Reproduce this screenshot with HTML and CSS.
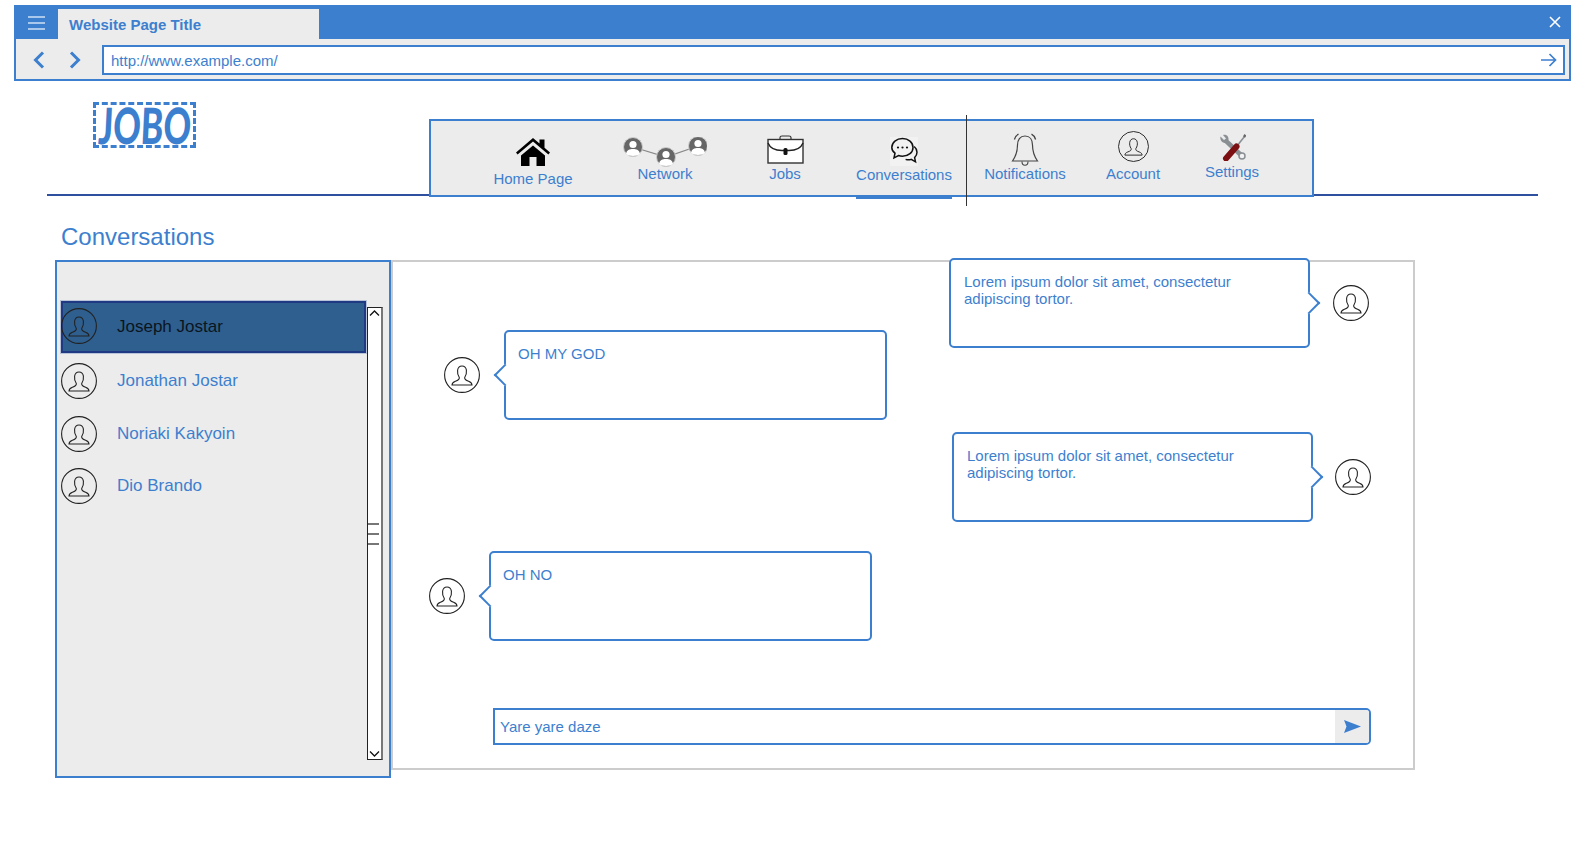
FILE: index.html
```html
<!DOCTYPE html>
<html>

<head>
    <meta charset="UTF-8" />
    <title>Website Page Title</title>
    <link rel="stylesheet" href="styles.css">
</head>

<body>
    <svg class="defs" width="0" height="0">
        <symbol id="user" viewBox="0 0 36 36">
            <circle cx="18" cy="18" r="17.4" fill="none" stroke="#222" stroke-width="1.1" />
            <path d="M15.3 20.5C13.6 18 13.3 15.5 13.6 13.2C14 10.4 15.9 9 18 9C20.1 9 22 10.4 22.4 13.2C22.7 15.5 22.4 18 20.7 20.5C20.4 22.6 21.6 23.2 24.6 24.3C26.9 25.2 28 26.4 28 28L8 28C8 26.4 9.1 25.2 11.4 24.3C14.4 23.2 15.6 22.6 15.3 20.5Z" fill="none" stroke="#222" stroke-width="1.1" />
        </symbol>
    </svg>

    <div class="window">
        <div class="titlebar">
            <div class="menu-btn">
                <span></span><span></span><span></span>
            </div>
            <div class="tab">Website Page Title</div>
            <svg class="close" width="12" height="12" viewBox="0 0 12 12">
                <path d="M1 1L11 11M11 1L1 11" stroke="#fff" stroke-width="1.6" />
            </svg>
        </div>
        <div class="toolbar">
            <svg class="nav-arrow" width="14" height="18" viewBox="0 0 14 18">
                <path d="M11 1.5L3.5 9L11 16.5" fill="none" stroke="#3d7fcf" stroke-width="3" />
            </svg>
            <svg class="nav-arrow" width="14" height="18" viewBox="0 0 14 18">
                <path d="M3 1.5L10.5 9L3 16.5" fill="none" stroke="#3d7fcf" stroke-width="3" />
            </svg>
            <div class="address">
                <span class="address-text">http://www.example.com/</span>
                <svg width="16" height="14" viewBox="0 0 16 14">
                    <path d="M0 7H14.5M8.5 1L14.5 7L8.5 13" fill="none" stroke="#3d7fcf" stroke-width="1.7" />
                </svg>
            </div>
        </div>
    </div>

    <header class="site-header">
        <div class="logo"><span>JOBO</span></div>
        <nav class="main-nav">
            <a class="nav-item home">
                <svg width="34" height="28" viewBox="0 0 34 28">
                    <path d="M0 14.5L17 0L23.5 5.5V1.5H28.5V9.8L34 14.5L32.4 16.4L17 3.6L1.6 16.4Z" fill="#000" />
                    <path d="M5 17.5L17 7.5L29 17.5V28H20.5V19H13.5V28H5Z" fill="#000" />
                </svg>
                <span>Home Page</span>
            </a>
            <a class="nav-item network">
                <svg width="84" height="30" viewBox="0 0 84 30">
                    <path d="M10 10L43 20L75 9" fill="none" stroke="#888" stroke-width="1.2" />
                    <g id="node">
                        <circle cx="10" cy="10" r="9.5" fill="#666" stroke="#ccc" />
                        <circle cx="10" cy="7.5" r="3.6" fill="#fff" />
                        <path d="M3 17C3.5 13 6.5 12 10 12C13.5 12 16.5 13 17 17C14 19.6 6 19.6 3 17Z" fill="#fff" />
                    </g>
                    <use href="#node" x="33" y="10" />
                    <use href="#node" x="65" y="-1" />
                </svg>
                <span>Network</span>
            </a>
            <a class="nav-item jobs">
                <svg width="37" height="29" viewBox="0 0 37 29">
                    <path d="M13 5V2.5C13 1.5 14 1 15 1H22C23 1 24 1.5 24 2.5V5" fill="none" stroke="#333" stroke-width="1.2" />
                    <rect x="1" y="4.5" width="35" height="23.5" fill="#fff" stroke="#333" stroke-width="1.4" />
                    <path d="M1 8C3 13 8 15.5 15 15.5H22C29 15.5 34 13 36 8" fill="none" stroke="#222" stroke-width="1.4" />
                    <rect x="16.5" y="13" width="4" height="7" rx="1.5" fill="#111" />
                </svg>
                <span>Jobs</span>
            </a>
            <a class="nav-item conversations">
                <svg width="28" height="29" viewBox="0 0 28 29">
                    <rect width="28" height="29" fill="#f2f2f2" />
                    <path d="M12.5 1.5C18.5 1.5 23 5.4 23 10.4C23 15.4 18.5 19.2 12.5 19.2C11 19.2 9.7 19 8.5 18.5L4 20.8L5 16.2C3 14.6 1.8 12.6 1.8 10.4C1.8 5.4 6.5 1.5 12.5 1.5Z" fill="none" stroke="#111" stroke-width="1.5" />
                    <path d="M24.2 9.5C26 11 27 13 27 15.2C27 17.4 26 19.2 24.6 20.6L25.5 24.8L21.2 22.4C19.5 23 17.5 23 15.6 22.4" fill="none" stroke="#111" stroke-width="1.5" />
                    <circle cx="8" cy="10.5" r="1.1" fill="#111" />
                    <circle cx="12.5" cy="10.5" r="1.1" fill="#111" />
                    <circle cx="17" cy="10.5" r="1.1" fill="#111" />
                </svg>
                <span class="active-label">Conversations</span>
            </a>
            <a class="nav-item notifications">
                <svg width="28" height="34" viewBox="0 0 28 34">
                    <path d="M14 3C9 3 6.5 7 6.5 12C6.5 19 5 23 1.5 28H26.5C23 23 21.5 19 21.5 12C21.5 7 19 3 14 3Z" fill="none" stroke="#444" stroke-width="1.2" />
                    <path d="M11 28.5C11 33.5 17 33.5 17 28.5" fill="none" stroke="#444" stroke-width="1.1" />
                    <path d="M7.5 1.2C5.5 2.2 4 4 3.4 6.5M20.5 1.2C22.5 2.2 24 4 24.6 6.5" fill="none" stroke="#444" stroke-width="1.3" />
                </svg>
                <span>Notifications</span>
            </a>
            <a class="nav-item account">
                <svg width="31" height="31"><use href="#user" /></svg>
                <span>Account</span>
            </a>
            <a class="nav-item settings">
                <svg width="27" height="27" viewBox="0 0 27 27">
                    <path d="M7 7L22.5 21.5" fill="none" stroke="#8a8f94" stroke-width="4.5" />
                    <path d="M1.5 2.5L5 6L7 4.5L4 1C7.5 0 10 2.5 9.5 6L7 9C4 9.5 0.5 6.5 1.5 2.5Z" fill="#8a8f94" />
                    <circle cx="23" cy="22" r="3" fill="#f2f2f2" stroke="#8a8f94" stroke-width="1.5" />
                    <path d="M18 12L25.5 2.5" fill="none" stroke="#8a8f94" stroke-width="1.6" />
                    <path d="M25 3L26.5 0.8" fill="none" stroke="#666" stroke-width="2.4" />
                    <path d="M7 24.5L17.5 12.5" fill="none" stroke="#7c0f12" stroke-width="6" stroke-linecap="round" />
                </svg>
                <span>Settings</span>
            </a>
        </nav>
    </header>

    <main class="content">
        <h1 class="page-title">Conversations</h1>
        <div class="columns">
            <aside class="contacts">
                <ul class="contact-list">
                    <li class="contact selected">
                        <svg width="36" height="36"><use href="#user" /></svg>
                        <span>Joseph Jostar</span>
                    </li>
                    <li class="contact">
                        <svg width="36" height="36"><use href="#user" /></svg>
                        <span>Jonathan Jostar</span>
                    </li>
                    <li class="contact">
                        <svg width="36" height="36"><use href="#user" /></svg>
                        <span>Noriaki Kakyoin</span>
                    </li>
                    <li class="contact">
                        <svg width="36" height="36"><use href="#user" /></svg>
                        <span>Dio Brando</span>
                    </li>
                </ul>
                <div class="scrollbar">
                    <svg width="13" height="10" viewBox="0 0 13 10">
                        <path d="M2 7.5L6.5 3L11 7.5" fill="none" stroke="#111" stroke-width="1.3" />
                    </svg>
                    <div class="grip"><span></span><span></span><span></span></div>
                    <svg class="scroll-down" width="13" height="10" viewBox="0 0 13 10">
                        <path d="M2 2.5L6.5 7L11 2.5" fill="none" stroke="#111" stroke-width="1.3" />
                    </svg>
                </div>
            </aside>

            <section class="chat">
                <div class="msg msg-1">
                    <div class="bubble arrow-right">Lorem ipsum dolor sit amet, consectetur adipiscing tortor.</div>
                    <svg width="36" height="36"><use href="#user" /></svg>
                </div>
                <div class="msg msg-2">
                    <svg width="36" height="36"><use href="#user" /></svg>
                    <div class="bubble arrow-left">OH MY GOD</div>
                </div>
                <div class="msg msg-3">
                    <div class="bubble arrow-right">Lorem ipsum dolor sit amet, consectetur adipiscing tortor.</div>
                    <svg width="36" height="36"><use href="#user" /></svg>
                </div>
                <div class="msg msg-4">
                    <svg width="36" height="36"><use href="#user" /></svg>
                    <div class="bubble arrow-left">OH NO</div>
                </div>
                <div class="composer">
                    <div class="composer-text">Yare yare daze</div>
                    <div class="send-btn">
                        <svg width="17" height="13" viewBox="0 0 17 13">
                            <path d="M0 0L17 6.5L0 13L2.5 6.5Z" fill="#3d7fcf" />
                        </svg>
                    </div>
                </div>
            </section>
        </div>
    </main>
</body>

</html>
```

FILE: styles.css
```css
* {
    box-sizing: border-box;
}

body {
    margin: 0;
    background-color: white;
    color: #3d7fcf;
    font-family: "Liberation Sans", Arial, sans-serif;
}

.defs {
    display: block;
    height: 0;
}

/* browser window */
.window {
    width: 1557px;
    height: 76px;
    margin: 5px 0 0 14px;
    border: 2px solid #3d7fcf;
    border-top: none;
}

.titlebar {
    display: flex;
    align-items: flex-end;
    height: 34px;
    margin: 0 -1px;
    background-color: #3d7fcf;
}

.menu-btn {
    display: flex;
    flex-direction: column;
    gap: 4px;
    width: 43px;
    padding: 0 0 9px 13px;
}

.menu-btn span {
    display: block;
    width: 17px;
    height: 2px;
    background-color: #a9c8ec;
}

.tab {
    width: 261px;
    height: 30px;
    padding: 7px 0 0 11px;
    background-color: #ececec;
    font-size: 15px;
    font-weight: bold;
}

.close {
    margin: 0 9px 11px auto;
}

.toolbar {
    display: flex;
    align-items: center;
    height: 40px;
    padding: 1px 4px 0 0;
    background-color: #ececec;
}

.nav-arrow {
    margin-left: 16px;
}

.nav-arrow + .nav-arrow {
    margin-left: 22px;
}

.address {
    display: flex;
    align-items: center;
    justify-content: space-between;
    width: 1465px;
    height: 30px;
    margin-left: 20px;
    padding: 0 6px 0 7px;
    border: 2px solid #3d7fcf;
    background-color: white;
    font-size: 15px;
}

.address-text {
    padding-top: 2px;
}

/* site header */
.site-header {
    display: flex;
    align-items: flex-start;
    width: 1491px;
    height: 115px;
    margin-left: 47px;
    border-bottom: 2px solid #2f4f9f;
}

.logo {
    display: flex;
    justify-content: center;
    width: 103px;
    height: 46px;
    margin: 21px 0 0 46px;
    border: 3px dashed #3d7fcf;
}

.logo span {
    font-family: Lato, "DejaVu Sans", sans-serif;
    font-size: 50px;
    font-weight: 900;
    line-height: 40px;
    white-space: nowrap;
    transform: scaleX(0.68) skewX(-4deg);
}

.main-nav {
    position: relative;
    display: flex;
    align-items: flex-start;
    flex-shrink: 0;
    width: 885px;
    height: 78px;
    margin: 38px 0 0 233px;
    padding-left: 41px;
    border: 2px solid #3d7fcf;
    background-color: #ececec;
}

/* divider that crosses the nav */
.main-nav::after {
    content: "";
    position: absolute;
    left: 535px;
    top: -6px;
    width: 1px;
    height: 91px;
    background-color: #333;
}

.nav-item {
    display: flex;
    flex-direction: column;
    align-items: center;
    font-size: 15px;
    line-height: 17px;
}

.home { width: 122px; padding-top: 17px; }
.home span { margin-top: 4px; }
.network { width: 142px; padding-top: 16px; }
.network span { margin-top: -2px; }
.jobs { width: 98px; padding-top: 14px; }
.jobs span { margin-top: 1px; }
.conversations { width: 140px; padding-top: 16px; }
.conversations span { margin-top: 0; }
.notifications { width: 102px; padding-top: 12px; }
.notifications span { margin-top: -2px; }
.account { width: 114px; padding-top: 10px; }
.account span { margin-top: 3px; }
.settings { width: 84px; padding-top: 13px; }
.settings span { margin-top: 2px; }

.active-label {
    position: relative;
}

.active-label::after {
    content: "";
    position: absolute;
    left: 0;
    right: 0;
    bottom: -16px;
    height: 3px;
    background-color: #3d7fcf;
}

/* page content */
.content {
    margin-left: 55px;
}

.page-title {
    margin: 27px 0 9px 6px;
    font-size: 24px;
    font-weight: normal;
    line-height: 28px;
}

.columns {
    display: flex;
    align-items: flex-start;
}

.contacts {
    display: flex;
    align-items: flex-start;
    width: 336px;
    height: 518px;
    padding: 39px 0 0 4px;
    border: 2px solid #3d7fcf;
    background-color: #ececec;
}

.contact-list {
    display: flex;
    flex-direction: column;
    gap: 1px;
    width: 305px;
    margin: 0;
    padding: 0;
    list-style: none;
}

.contact {
    display: flex;
    align-items: center;
    gap: 20px;
    height: 52px;
    font-size: 17px;
}

.contact:nth-child(2) {
    margin-top: 1px;
}

.contact:nth-child(4) {
    margin-top: -1px;
}

.selected {
    background-color: #2e5f8f;
    box-shadow: inset 0 0 0 2px #1f3a82, 0 0 0 1px #b8c2d8;
    color: #0b1520;
}

.selected svg {
    margin-top: -3px;
}

.scrollbar {
    display: flex;
    flex-direction: column;
    flex-shrink: 0;
    width: 16px;
    height: 453px;
    margin: 6px 0 0 1px;
    border: 1px solid #222;
    border-right: 2px solid #777;
    background-color: white;
}

.grip {
    display: flex;
    flex-direction: column;
    gap: 8px;
    margin-top: 205px;
    padding: 0 2px 0 0;
}

.grip span {
    display: block;
    height: 2px;
    background-color: #777;
}

.scroll-down {
    margin-top: auto;
}

.chat {
    display: flex;
    flex-direction: column;
    align-items: flex-start;
    width: 1024px;
    height: 510px;
    border: 2px solid #ccc;
}

.msg {
    display: flex;
    align-items: center;
    gap: 24px;
}

.msg svg {
    flex-shrink: 0;
}

.msg-1 { margin: -4px 0 0 556px; gap: 23px; }
.msg-2 { margin: -18px 0 0 51px; }
.msg-3 { margin: 12px 0 0 559px; gap: 22px; }
.msg-4 { margin: 29px 0 0 36px; }

.bubble {
    position: relative;
    width: 383px;
    height: 90px;
    padding: 13px 13px;
    border: 2px solid #3d7fcf;
    border-radius: 5px;
    background-color: white;
    font-size: 15px;
    line-height: 17px;
}

.arrow-left {
    padding-left: 12px;
}

.arrow-right {
    width: 361px;
}

.arrow-left::before,
.arrow-right::after {
    content: "";
    position: absolute;
    top: 35px;
    width: 14px;
    height: 14px;
    background-color: white;
    border: 2px solid #3d7fcf;
    transform: rotate(45deg);
}

.arrow-left::before {
    left: -9px;
    border-top: none;
    border-right: none;
}

.arrow-right::after {
    right: -9px;
    border-bottom: none;
    border-left: none;
}

.composer {
    display: flex;
    width: 878px;
    height: 37px;
    margin: 67px 0 0 100px;
    border: 2px solid #3d7fcf;
    border-radius: 0 5px 5px 0;
    font-size: 15px;
}

.composer-text {
    flex: 1;
    padding: 8px 5px;
    line-height: 18px;
}

.send-btn {
    display: flex;
    align-items: center;
    justify-content: center;
    width: 34px;
    border-radius: 0 3px 3px 0;
    background-color: #ececec;
}
```
